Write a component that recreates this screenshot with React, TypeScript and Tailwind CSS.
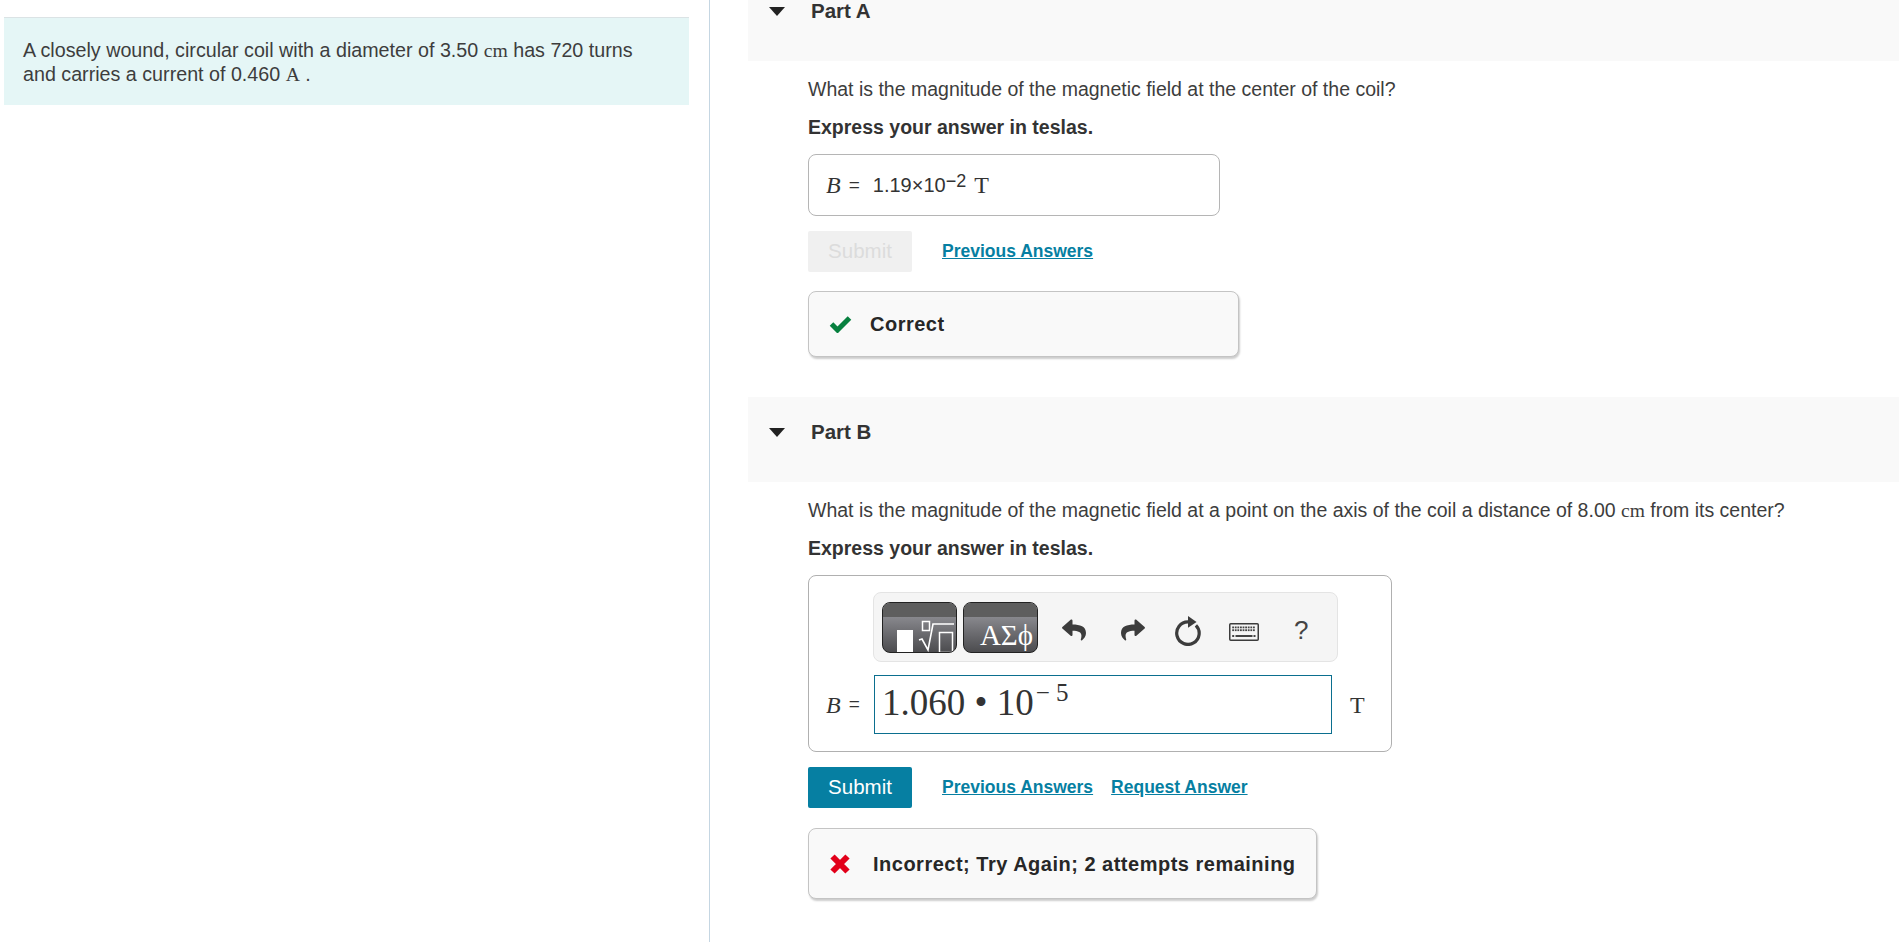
import { FaReply, FaShare } from 'react-icons/fa'

const serif = 'font-["Liberation_Serif",serif]'

function PartHeader({ label, className }: { label: string; className: string }) {
  return (
    <div className={`flex bg-[#f9f9f9] pl-[21px] ${className}`}>
      <svg width="16" height="9" viewBox="0 0 16 9" className="mt-[7px] shrink-0">
        <path d="M0 0h16L8 9z" fill="#222" />
      </svg>
      <span className="ml-[26px] text-[20.5px] leading-[22px] font-bold text-[#333]">{label}</span>
    </div>
  )
}

function Feedback({ icon, text, className }: { icon: React.ReactNode; text: string; className: string }) {
  return (
    <div className={`flex items-center rounded-[8px] border border-[#c4c4c4] bg-[#f9f9f9] shadow-[1px_2px_2px_rgba(0,0,0,0.2)] ${className}`}>
      {icon}
      <span className="text-[20px] font-bold tracking-[0.5px] text-[#272727]">{text}</span>
    </div>
  )
}

function SubmitRow({ active, request }: { active: boolean; request?: boolean }) {
  return (
    <div className="flex items-start">
      <div className={`flex h-[41px] w-[104px] items-center justify-center rounded-[2px] text-[20.5px] ${active ? 'bg-[#067fa2] text-white' : 'bg-[#f0f0f0] text-[#dcdcdc]'}`}>
        Submit
      </div>
      <a className="mt-[10px] ml-[30px] text-[17.5px] leading-[20px] font-bold text-[#067fa2] underline">Previous Answers</a>
      {request && <a className="mt-[10px] ml-[18px] text-[17.5px] leading-[20px] font-bold text-[#067fa2] underline">Request Answer</a>}
    </div>
  )
}

function ToolButton({ children }: { children: React.ReactNode }) {
  return (
    <div className="relative h-[51px] w-[75px] overflow-hidden rounded-[8px] border border-[#222] bg-gradient-to-b from-[#a2a2a8] to-[#4c4c4f]">
      <div className="h-[14px] bg-[#5e5e5e]" />
      {children}
    </div>
  )
}

function TemplateIcon() {
  return (
    <svg width="73" height="49" viewBox="0 0 73 49" className="absolute top-0 left-0">
      <rect x="14" y="27" width="16" height="24" fill="#fff" />
      <rect x="39.5" y="18.5" width="7" height="9" fill="none" stroke="#fff" strokeWidth="1.5" />
      <path d="M36 37l3-1 6 11 5-26h21" fill="none" stroke="#fff" strokeWidth="1.6" />
      <rect x="56.5" y="29.5" width="13" height="20" fill="none" stroke="#fff" strokeWidth="1.5" />
    </svg>
  )
}

function KeyboardIcon() {
  const dots = []
  for (let r = 0; r < 2; r++) {
    for (let c = 0; c < 9; c++) {
      dots.push(<rect key={`${r}-${c}`} x={3.2 + c * 2.6} y={3.5 + r * 2.8} width="1.8" height="1.8" fill="#444" />)
    }
  }
  return (
    <svg width="30" height="18" viewBox="0 0 30 18">
      <rect x="0.75" y="0.75" width="28.5" height="16.5" rx="1" fill="#f5f5f5" stroke="#3c3c3c" strokeWidth="1.5" />
      {dots}
      <rect x="3.2" y="12" width="2" height="2" fill="#444" />
      <rect x="24.5" y="12" width="2" height="2" fill="#444" />
      <rect x="6.5" y="12" width="17" height="2" fill="#444" />
    </svg>
  )
}

function RefreshIcon() {
  return (
    <svg width="28" height="31" viewBox="0 0 26 29">
      <path d="M20.4 9.6a10.5 10.5 0 1 1-7.4-3.1" fill="none" stroke="#3c3c3c" strokeWidth="3" />
      <path d="M13 1l8 5.5-8 5.5z" fill="#3c3c3c" />
    </svg>
  )
}

function CheckIcon() {
  return (
    <svg width="23" height="18" viewBox="0 0 23 18" className="mr-[18px] ml-[20px] shrink-0">
      <path d="M2.5 9l6 6L20.5 3" fill="none" stroke="#07803f" strokeWidth="5" />
    </svg>
  )
}

function CrossIcon() {
  return (
    <svg width="20" height="20" viewBox="0 0 20 20" className="mr-[23px] ml-[21px] shrink-0">
      <path d="M2.5 2.5l15 15M17.5 2.5l-15 15" fill="none" stroke="#e2001a" strokeWidth="6" />
    </svg>
  )
}

export default function App() {
  return (
    <div className='flex h-[942px] w-[1899px] overflow-hidden bg-white font-["Liberation_Sans",Arial,sans-serif] text-[#333]'>
      {/* Problem statement */}
      <div className="h-full w-[710px] shrink-0 border-r border-[#c5d6e2] pt-[17px] pl-[4px]">
        <div className="h-[88px] w-[685px] border-t border-[#dbe3e5] bg-[#e5f6f6] px-[19px] pt-[20px] text-[19.7px] leading-[24px] text-[#3d3d3d]">
          A closely wound, circular coil with a diameter of 3.50 <span className={serif}>cm</span> has 720 turns
          <br />
          and carries a current of 0.460 <span className={serif}>A</span> .
        </div>
      </div>

      <div className="min-w-0 flex-1 pl-[38px]">
        {/* Part A */}
        <PartHeader label="Part A" className="h-[61px]" />
        <div className="pl-[60px]">
          <p className="mt-[16px] text-[19.5px] leading-[24px] text-[#3d3d3d]">What is the magnitude of the magnetic field at the center of the coil?</p>
          <p className="mt-[14px] text-[19.5px] leading-[24px] font-bold text-[#333]">Express your answer in teslas.</p>
          <div className="mt-[15px] flex h-[62px] w-[412px] items-center rounded-[8px] border border-[#b5b5b5] pl-[17px] text-[#333]">
            <span className={`${serif} text-[24px] italic`}>B</span>
            <span className="ml-[8px] text-[19px]">=</span>
            <span className="ml-[13px] text-[20px]">1.19×10</span>
            <sup className="-top-[4px] text-[18px]">−2</sup>
            <span className={`${serif} ml-[8px] text-[24px]`}>T</span>
          </div>
          <div className="mt-[15px]">
            <SubmitRow active={false} />
          </div>
          <Feedback icon={<CheckIcon />} text="Correct" className="mt-[19px] h-[66px] w-[431px]" />
        </div>

        {/* Part B */}
        <PartHeader label="Part B" className="mt-[40px] h-[85px] pt-[24px]" />
        <div className="pl-[60px]">
          <p className="mt-[16px] text-[19.5px] leading-[24px] text-[#3d3d3d]">
            What is the magnitude of the magnetic field at a point on the axis of the coil a distance of 8.00 <span className={serif}>cm</span> from its center?
          </p>
          <p className="mt-[13px] text-[19.5px] leading-[24px] font-bold text-[#333]">Express your answer in teslas.</p>
          <div className="mt-[15px] h-[177px] w-[584px] rounded-[8px] border border-[#b0b0b0]">
            <div className="mt-[16px] ml-[64px] flex h-[70px] w-[465px] items-center rounded-[8px] border border-[#e4e4e4] bg-[#f5f5f5] pl-[8px]">
              <div className="flex gap-[6px]">
                <ToolButton>
                  <TemplateIcon />
                </ToolButton>
                <ToolButton>
                  <span className={`${serif} absolute right-[4px] bottom-[1px] text-[29px] leading-[32px] text-white`}>ΑΣϕ</span>
                </ToolButton>
              </div>
              <div className="mt-[6px] flex flex-1 items-center">
                <FaReply className="ml-[24px] text-[24px] text-[#3c3c3c]" />
                <FaShare className="ml-[35px] text-[24px] text-[#3c3c3c]" />
                <div className="ml-[29px]"><RefreshIcon /></div>
                <div className="mt-[4px] ml-[27px]"><KeyboardIcon /></div>
                <span className="ml-[35px] text-[26px] leading-[30px] text-[#444]">?</span>
              </div>
            </div>
            <div className="mt-[13px] flex h-[59px] items-center">
              <div className="flex w-[65px] shrink-0 items-center pl-[17px]">
                <span className={`${serif} text-[24px] italic`}>B</span>
                <span className="ml-[8px] text-[19px]">=</span>
              </div>
              <div className={`${serif} flex h-[59px] w-[458px] items-start border border-[#0b6f8f] pt-[6px] pl-[7px] text-[37px] leading-[42px] text-[#333]`}>
                1.060 • 10
                <span className="-mt-[10px] ml-[2px] text-[25px] leading-[42px]">− 5</span>
              </div>
              <span className={`${serif} ml-[18px] text-[24px]`}>T</span>
            </div>
          </div>
          <div className="mt-[15px]">
            <SubmitRow active request />
          </div>
          <Feedback icon={<CrossIcon />} text="Incorrect; Try Again; 2 attempts remaining" className="mt-[20px] h-[71px] w-[509px]" />
        </div>
      </div>
    </div>
  )
}
